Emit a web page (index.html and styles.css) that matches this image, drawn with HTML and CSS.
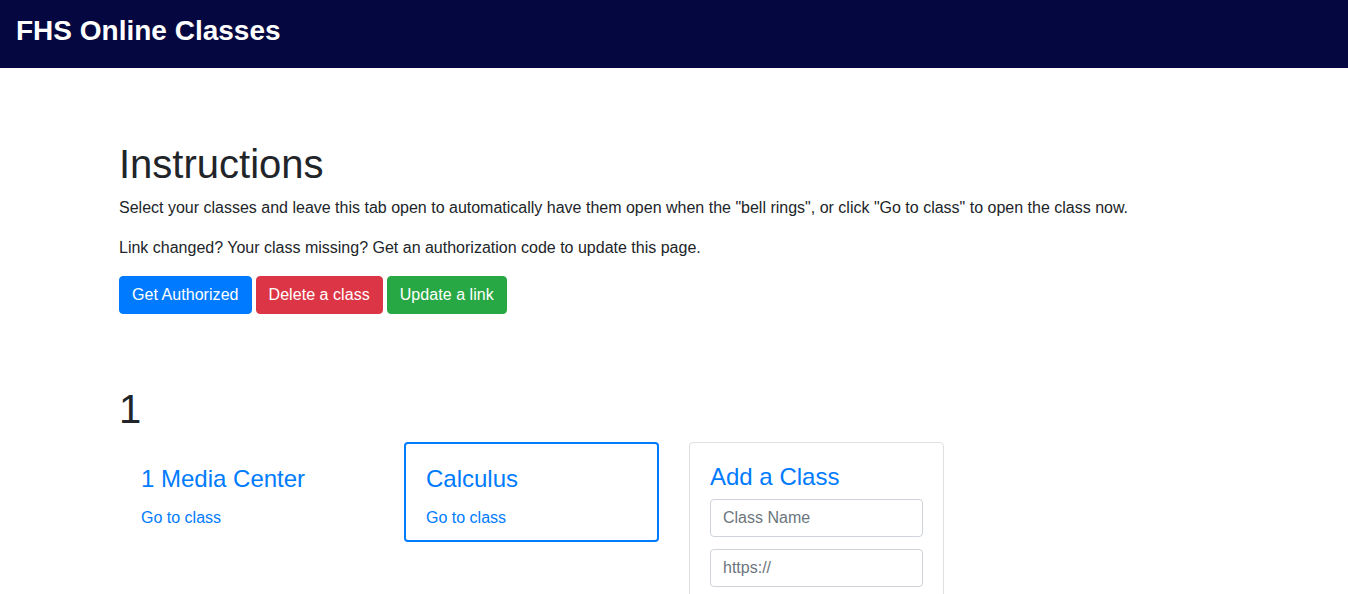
FILE: index.html
```html
<!DOCTYPE html>
<html lang="en">
<head>
<meta charset="utf-8">
<title>FHS Online Classes</title>
<link rel="stylesheet" href="styles.css">
</head>
<body>
<nav class="navbar">
  <h3 class="brand">FHS Online Classes</h3>
</nav>
<main class="container">
  <section class="intro">
    <h1 class="heading">Instructions</h1>
    <p class="text">Select your classes and leave this tab open to automatically have them open when the "bell rings", or click "Go to class" to open the class now.</p>
    <p class="text">Link changed? Your class missing? Get an authorization code to update this page.</p>
    <div class="actions">
      <button class="btn btn-blue">Get Authorized</button>
      <button class="btn btn-red">Delete a class</button>
      <button class="btn btn-green">Update a link</button>
    </div>
  </section>
  <section class="period">
    <h1 class="heading heading-period">1</h1>
    <div class="row">
      <div class="col">
        <div class="card card-plain">
          <h4 class="card-title">1 Media Center</h4>
          <a class="card-link" href="#">Go to class</a>
        </div>
      </div>
      <div class="col">
        <div class="card card-selected">
          <h4 class="card-title">Calculus</h4>
          <a class="card-link" href="#">Go to class</a>
        </div>
      </div>
      <div class="col">
        <div class="card card-add">
          <h4 class="card-title card-title-add">Add a Class</h4>
          <input class="field" type="text" placeholder="Class Name">
          <input class="field" type="text" placeholder="https://">
        </div>
      </div>
    </div>
  </section>
</main>
</body>
</html>
```

FILE: styles.css
```css
* {
  box-sizing: border-box;
}

html, body {
  margin: 0;
  padding: 0;
}

body {
  font-family: "Liberation Sans", Arial, sans-serif;
  font-size: 16px;
  line-height: 1.5;
  color: #212529;
  background: #fff;
}

.navbar {
  height: 68px;
  background: #050840;
  padding: 14px 16px 0;
}

.brand {
  margin: 0;
  color: #fff;
  font-size: 28px;
  font-weight: 700;
  line-height: 1.2;
}

.container {
  width: 1140px;
  margin: 0 auto;
  padding: 0 15px;
}

.intro {
  padding-top: 72px;
}

.heading {
  margin: 0 0 8px;
  font-size: 40px;
  font-weight: 500;
  line-height: 1.2;
}

.text {
  margin: 0 0 16px;
}

.actions {
  display: flex;
  gap: 4px;
}

.btn {
  font-family: inherit;
  font-size: 16px;
  line-height: 24px;
  padding: 6px 12px;
  border: 1px solid transparent;
  border-radius: 4px;
  color: #fff;
  letter-spacing: 0.05px;
  cursor: pointer;
}

.btn-blue {
  background: #007bff;
  border-color: #007bff;
}

.btn-red {
  background: #dc3545;
  border-color: #dc3545;
}

.btn-green {
  background: #28a745;
  border-color: #28a745;
}

.period {
  padding-top: 71px;
}

.heading-period {
  margin-bottom: 9px;
}

.row {
  display: flex;
  margin: 0 -15px;
}

.col {
  width: 285px;
  padding: 0 15px;
}

.card {
  display: flex;
  flex-direction: column;
  align-items: flex-start;
  border-radius: 4px;
  padding: 21px 20px 10px;
}

.card-plain {
  border: 2px solid transparent;
}

.card-selected {
  border: 2px solid #007bff;
}

.card-add {
  border: 1px solid rgba(0, 0, 0, 0.125);
  padding: 20px 20px 20px;
  min-height: 170px;
}

.card-title {
  margin: 0 0 12px;
  font-size: 24px;
  font-weight: 500;
  line-height: 1.2;
  color: #007bff;
}

.card-title-add {
  margin-bottom: 7px;
}

.card-link {
  color: #007bff;
  text-decoration: none;
}

.field {
  width: 100%;
  height: 38px;
  padding: 6px 12px;
  font-family: inherit;
  font-size: 16px;
  line-height: 24px;
  color: #495057;
  border: 1px solid #ced4da;
  border-radius: 4px;
  margin-bottom: 12px;
}

.field::placeholder {
  color: #6c757d;
}
```
